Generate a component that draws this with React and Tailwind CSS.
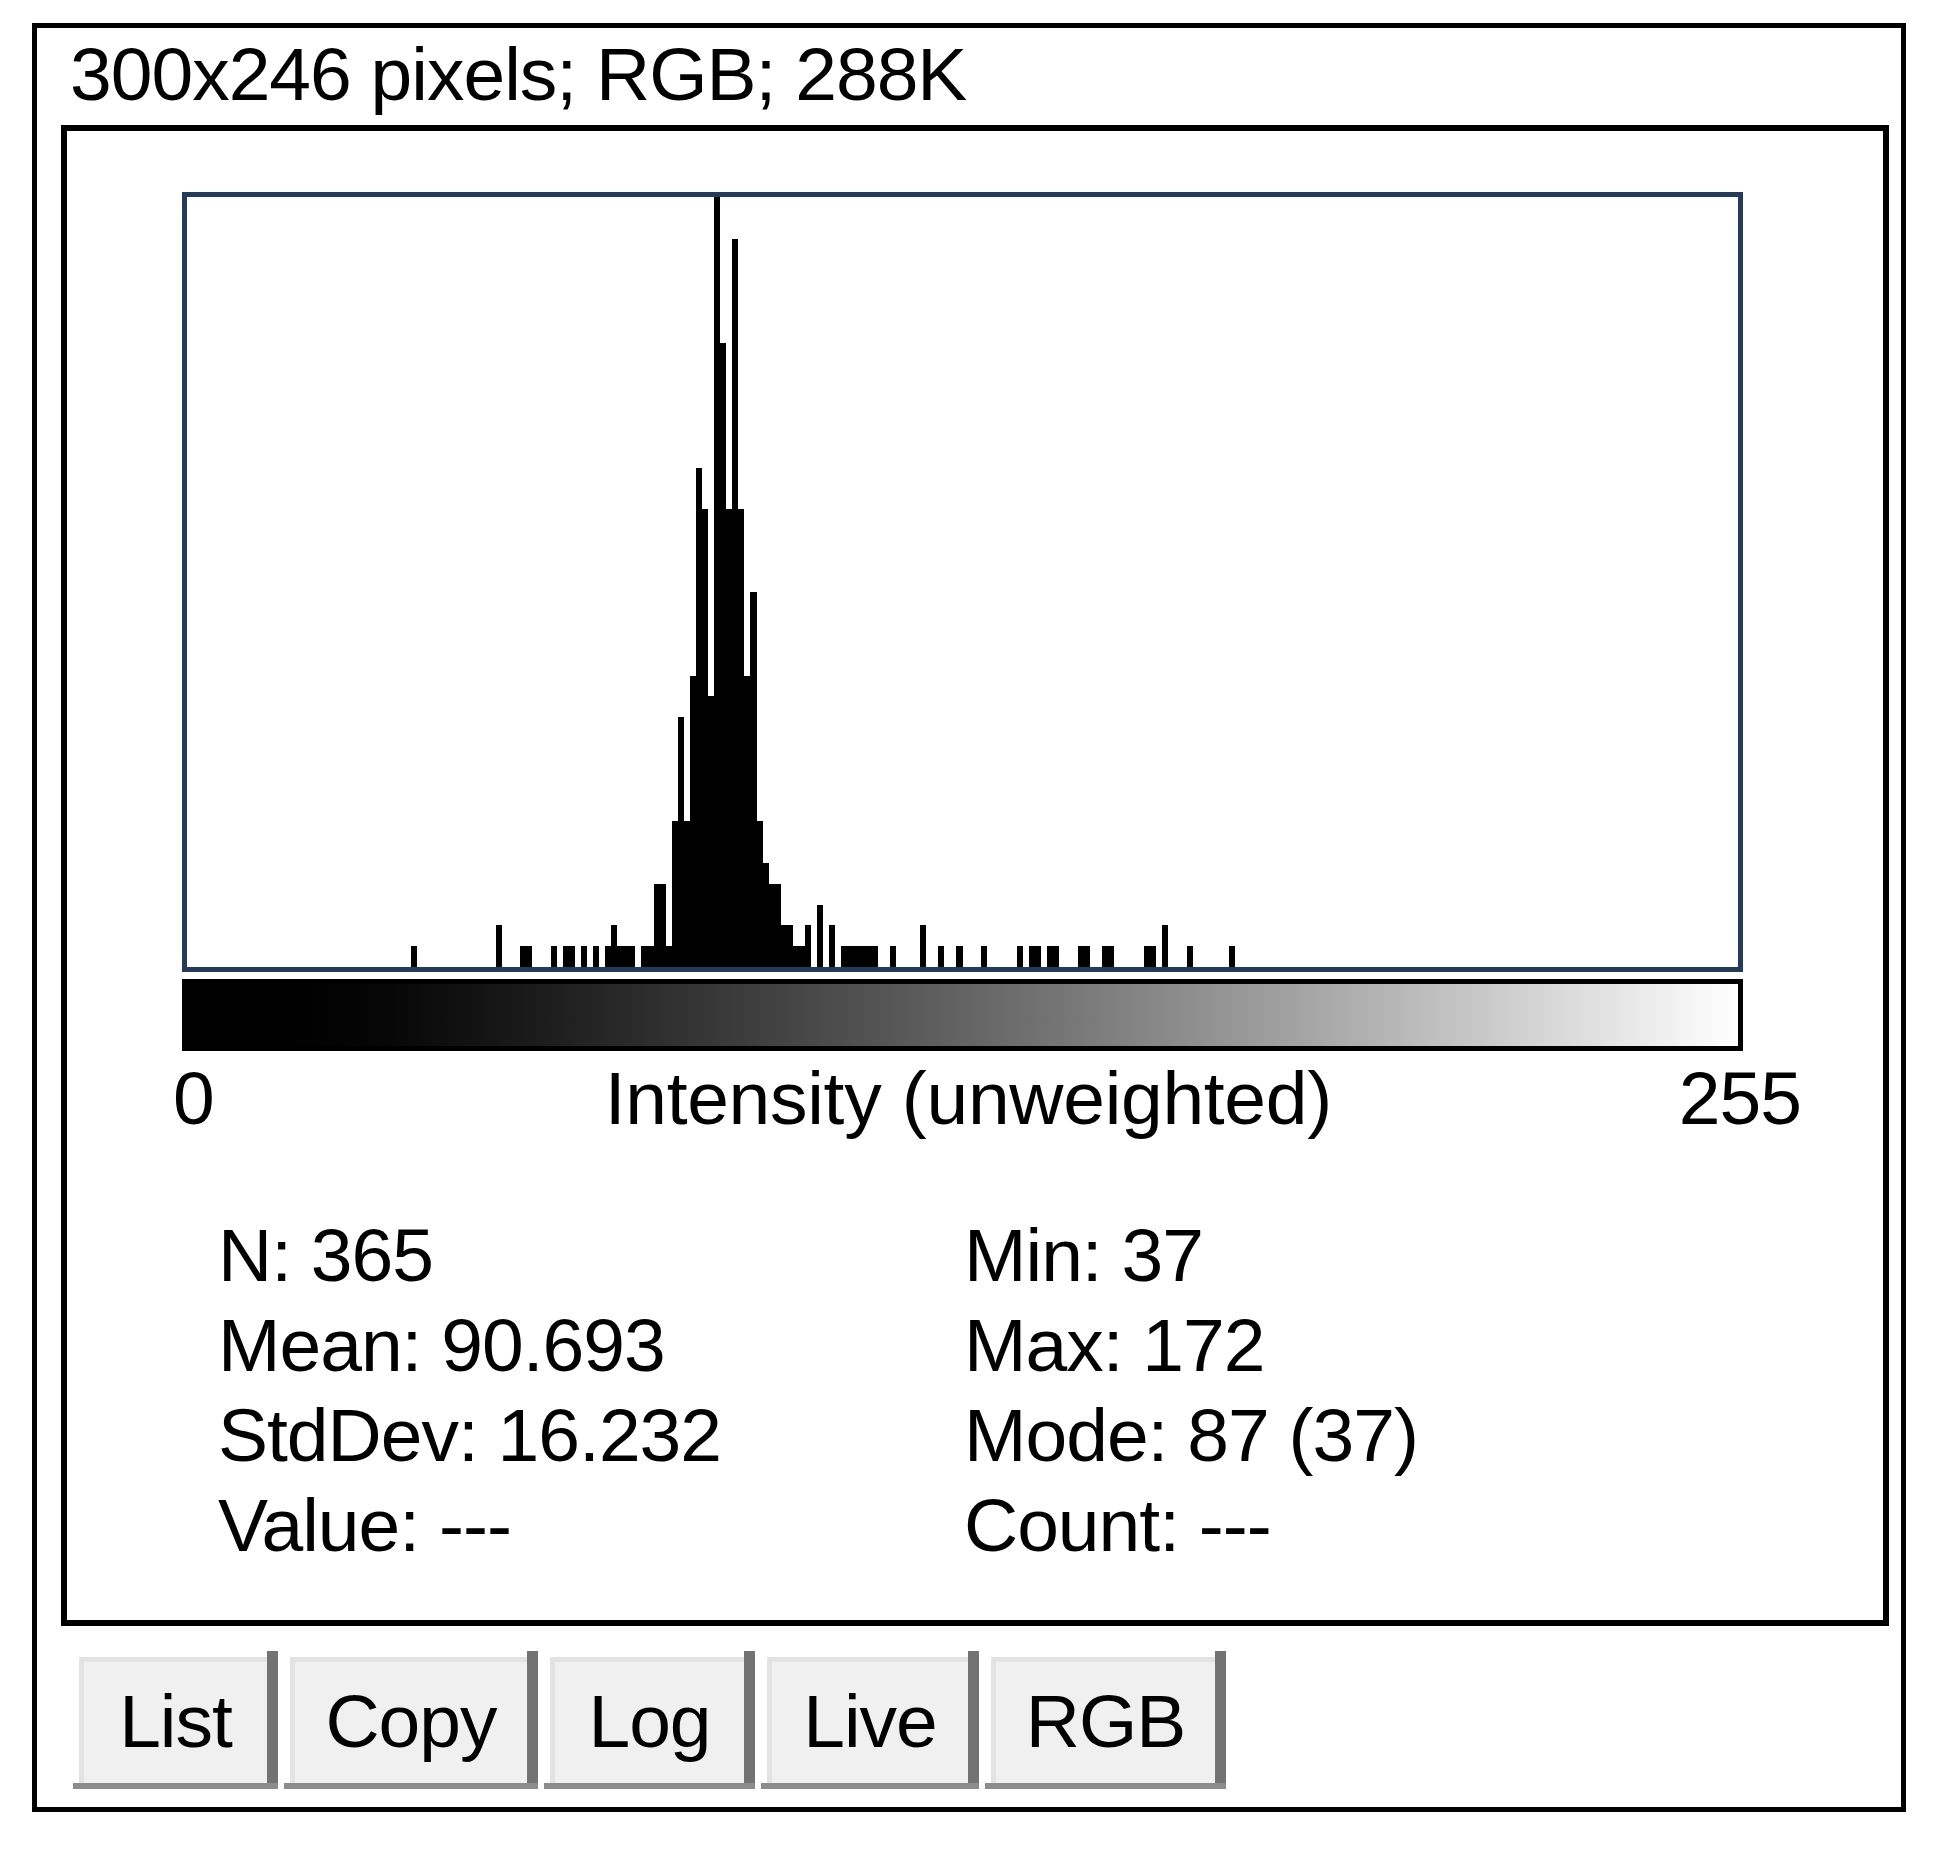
import React from 'react'

// counts per intensity bin, read off the plot
const counts = {
  37: 1, 51: 2, 55: 1, 56: 1, 60: 1, 62: 1, 63: 1, 65: 1, 67: 1, 69: 1, 70: 2, 71: 1, 72: 1, 73: 1,
  75: 1, 76: 1, 77: 4, 78: 4, 79: 1, 80: 7, 81: 12, 82: 7, 83: 14, 84: 24, 85: 22, 86: 13, 87: 37,
  88: 30, 89: 22, 90: 35, 91: 22, 92: 14, 93: 18, 94: 7, 95: 5, 96: 4, 97: 4, 98: 2, 99: 2, 100: 1,
  101: 1, 102: 2, 104: 3, 106: 2, 108: 1, 109: 1, 110: 1, 111: 1, 112: 1, 113: 1, 116: 1, 121: 2,
  124: 1, 127: 1, 131: 1, 137: 1, 139: 1, 140: 1, 142: 1, 143: 1, 147: 1, 148: 1, 151: 1, 152: 1,
  158: 1, 159: 1, 161: 2, 165: 1, 172: 1,
}
const maxCount = 37

const stats = [
  ['N: 365', 'Min: 37'],
  ['Mean: 90.693', 'Max: 172'],
  ['StdDev: 16.232', 'Mode: 87 (37)'],
  ['Value: ---', 'Count: ---'],
]

const buttons = [
  { label: 'List', w: 'w-[188px]' },
  { label: 'Copy', w: 'w-[237px]' },
  { label: 'Log', w: 'w-[194px]' },
  { label: 'Live', w: 'w-[201px]' },
  { label: 'RGB', w: 'w-[224px]' },
]

function Histogram() {
  return (
    <svg width="1551" height="770" viewBox="0 0 256 128" preserveAspectRatio="none" shapeRendering="crispEdges" className="block">
      {Object.entries(counts).map(([bin, c]) => {
        const h = (c / maxCount) * 128
        return <rect key={bin} x={Number(bin)} y={128 - h} width="1" height={h} fill="#000" />
      })}
    </svg>
  )
}

function AwtButton({ label, w }) {
  return (
    <div className="flex flex-col">
      <div className="flex">
        <div className="pl-[6px] pt-[6px]">
          <div className={`${w} h-[126px] bg-[#f0f0f0] border-t-[5px] border-l-[5px] border-[#e3e3e3] flex justify-center pt-[17px]`}>
            <span className="leading-[84px]">{label}</span>
          </div>
        </div>
        <div className="w-[11px] bg-[#737373]" />
      </div>
      <div className="h-[6px] bg-[#8c8c8c]" />
    </div>
  )
}

export default function App() {
  return (
    <div className="min-h-[1850px] bg-white pt-[23px] pl-[32px] text-black text-[75px] tracking-[-1px]" style={{ fontFamily: '"Liberation Sans", Arial, sans-serif' }}>
      <div className="w-[1874px] border-[5px] border-black flex flex-col">
        <div className="h-[97px] pt-[4px] pl-[33px] leading-[84px] whitespace-nowrap">300x246 pixels; RGB; 288K</div>

        <div className="ml-[24px] mr-[12px] border-[6px] border-black pt-[61px] pb-[50px]">
          <div className="ml-[115px] w-[1561px] border-[5px] border-[#243b5c] bg-white">
            <Histogram />
          </div>
          <div className="ml-[115px] mt-[7px] w-[1561px] h-[72px] border-[5px] border-black bg-linear-to-r from-black to-white" />

          <div className="mt-[5px] flex leading-[84px] whitespace-nowrap">
            <span className="ml-[106px]">0</span>
            <span className="ml-[391px] tracking-[-0.3px]">Intensity (unweighted)</span>
            <span className="ml-auto mr-[82px]">255</span>
          </div>

          <div className="mt-[70px] flex flex-col">
            {stats.map(([a, b]) => (
              <div key={a} className="flex leading-[90px] h-[90px] whitespace-nowrap">
                <span className="ml-[151px] w-[746px]">{a}</span>
                <span>{b}</span>
              </div>
            ))}
          </div>
        </div>

        <div className="mt-[25px] ml-[36px] pb-[18px] flex gap-[6px]">
          {buttons.map((b) => (
            <AwtButton key={b.label} label={b.label} w={b.w} />
          ))}
        </div>
      </div>
    </div>
  )
}
